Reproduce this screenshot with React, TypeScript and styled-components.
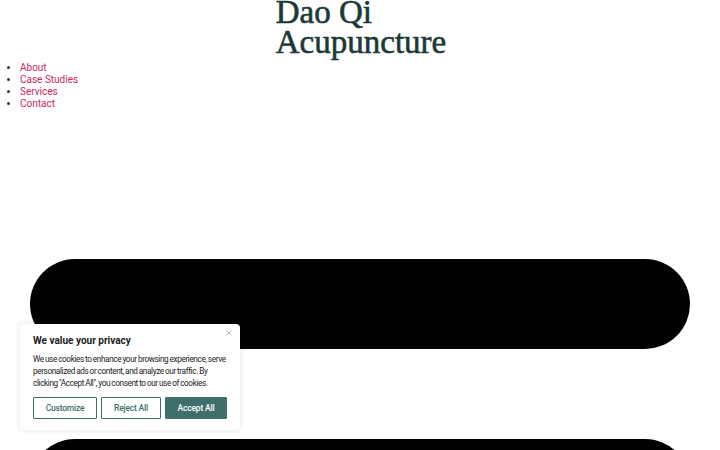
import React from "react";
import styled, { createGlobalStyle } from "styled-components";

const GlobalStyle = createGlobalStyle`
  html, body {
    margin: 0;
    padding: 0;
    background: #fff;
    overflow: hidden;
  }
  body {
    font-family: Roboto, "Liberation Sans", sans-serif;
  }
`;

const Page = styled.div`
  width: 720px;
  height: 450px;
  overflow: hidden;
  position: relative;
`;

const Header = styled.header`
  display: flex;
  flex-direction: column;
`;

const TitleWrapper = styled.div`
  display: flex;
  justify-content: center;
  margin-top: -3px;
  padding-left: 2px;
`;

const Title = styled.h1`
  margin: 0;
  font-family: "Liberation Serif", "DejaVu Serif", serif;
  font-weight: 400;
  font-size: 33px;
  line-height: 30px;
  color: #1b3a35;
  text-align: left;
  -webkit-text-stroke: 0.6px #1b3a35;
`;

const NavList = styled.ul`
  margin: 5px 0 0 0;
  padding-left: 20px;
  list-style: disc;
  font-size: 10px;
  line-height: 12px;
  color: #333;
`;

const NavItem = styled.li`
  a {
    color: #c8265f;
    text-decoration: none;
  }
`;

const Main = styled.main`
  display: flex;
  flex-direction: column;
  gap: 90px;
  padding: 149px 30px 0 30px;
`;

const Pill = styled.div`
  height: 90px;
  background: #000;
  border-radius: 45px;
`;

const CookieBox = styled.div`
  position: absolute;
  left: 20px;
  bottom: 20px;
  width: 220px;
  box-sizing: border-box;
  padding: 10px 12px 11px 13px;
  background: #fff;
  border-radius: 4px;
  box-shadow: 0 0 6px rgba(0, 0, 0, 0.12);
  font-family: Roboto, "Liberation Sans", sans-serif;
`;

const CloseButton = styled.button`
  position: absolute;
  top: 4px;
  right: 6px;
  border: none;
  background: transparent;
  padding: 2px;
  cursor: pointer;
  display: flex;
`;

const CookieTitle = styled.div`
  font-size: 10px;
  font-weight: 700;
  color: #212121;
  line-height: 12px;
  margin-top: 1px;
`;

const CookieText = styled.p`
  margin: 6px 0 0 0;
  font-size: 8.2px;
  letter-spacing: -0.38px;
  word-spacing: -0.4px;
  line-height: 12px;
  color: #212121;
`;

const ButtonRow = styled.div`
  display: flex;
  gap: 4px;
  margin-top: 8px;
`;

const CookieButton = styled.button<{ $primary?: boolean; $w: number }>`
  width: ${(p) => p.$w}px;
  height: 22px;
  box-sizing: border-box;
  border: 1.5px solid #3f6e6b;
  border-radius: 1px;
  background: ${(p) => (p.$primary ? "#3f6e6b" : "#fff")};
  color: ${(p) => (p.$primary ? "#fff" : "#3f6e6b")};
  font-family: Roboto, "Liberation Sans", sans-serif;
  font-size: 8.5px;
  font-weight: 500;
  letter-spacing: -0.2px;
  padding: 0;
  cursor: pointer;
`;

const App = () => {
  return (
    <Page>
      <GlobalStyle />
      <Header>
        <TitleWrapper>
          <Title>
            Dao Qi
            <br />
            Acupuncture
          </Title>
        </TitleWrapper>
        <NavList>
          <NavItem><a href="#">About</a></NavItem>
          <NavItem><a href="#">Case Studies</a></NavItem>
          <NavItem><a href="#">Services</a></NavItem>
          <NavItem><a href="#">Contact</a></NavItem>
        </NavList>
      </Header>
      <Main>
        <Pill />
        <Pill />
      </Main>
      <CookieBox>
        <CloseButton aria-label="Close">
          <svg width="6" height="6" viewBox="0 0 10 10">
            <path d="M1 1 L9 9 M9 1 L1 9" stroke="#9a9a9a" strokeWidth="1.2" />
          </svg>
        </CloseButton>
        <CookieTitle>We value your privacy</CookieTitle>
        <CookieText>
          We use cookies to enhance your browsing experience, serve personalized ads or content, and analyze our traffic. By clicking "Accept All", you consent to our use of cookies.
        </CookieText>
        <ButtonRow>
          <CookieButton $w={64}>Customize</CookieButton>
          <CookieButton $w={60}>Reject All</CookieButton>
          <CookieButton $w={62} $primary>Accept All</CookieButton>
        </ButtonRow>
      </CookieBox>
    </Page>
  );
};

export default App;
